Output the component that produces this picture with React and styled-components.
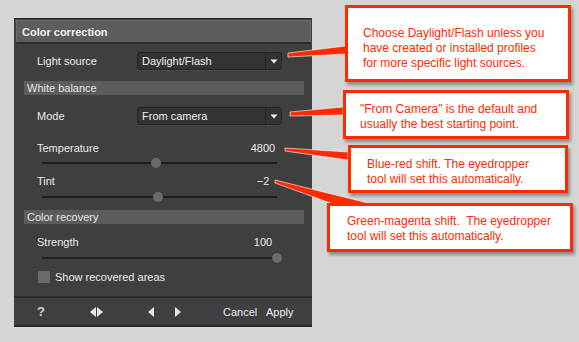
import React from "react";
import styled, { createGlobalStyle } from "styled-components";

const GlobalStyle = createGlobalStyle`
  body {
    margin: 0;
    background: #d5d5d5;
    font-family: "Liberation Sans", Arial, sans-serif;
  }
`;

const RED = "#ff2a00";

const Page = styled.div`
  position: relative;
  width: 579px;
  height: 342px;
  overflow: hidden;
  padding: 18px 0 0 14px;
  box-sizing: border-box;
`;

const Panel = styled.div`
  width: 298px;
  background: #3f3f3f;
  border-top: 1px solid #2a2a2a;
  border-bottom: 2px solid #262626;
  display: flex;
  flex-direction: column;
  color: #ececec;
  font-size: 11px;
`;

const Header = styled.div`
  height: 21px;
  margin: 1px 1px 0 2px;
  background: #5d5d5d;
  border: 1px solid #6a6a6a;
  border-bottom: none;
  display: flex;
  align-items: center;
  padding-left: 5px;
  font-weight: bold;
  color: #f2f2f2;
  box-shadow: 0 2px 0 #2c2c2c;
`;

const Body = styled.div`
  display: flex;
  flex-direction: column;
  padding: 10px 0 13px 0;
`;

const Row = styled.div`
  height: ${(p) => p.h || 18}px;
  margin-top: ${(p) => p.mt || 0}px;
  display: flex;
  align-items: center;
  padding-left: 23px;
`;

const Label = styled.span`
  width: 100px;
`;

const Select = styled.div`
  width: 143px;
  height: 16px;
  border: 1px solid #242424;
  border-radius: 3px;
  background: #333333;
  display: flex;
  align-items: center;
  box-shadow: 0 1px 0 #4a4a4a;
`;

const SelectText = styled.span`
  flex: 1;
  padding-left: 4px;
  color: #f0f0f0;
`;

const SelectArrow = styled.span`
  width: 15px;
  height: 100%;
  border-left: 1px solid #242424;
  display: flex;
  align-items: center;
  justify-content: center;
`;

const Section = styled.div`
  height: 14px;
  margin: ${(p) => p.mt || 0}px 8px 0 10px;
  background: #5c5c5c;
  display: flex;
  align-items: center;
  padding-left: 3px;
  color: #e6e6e6;
`;

const ParamHead = styled.div`
  display: flex;
  align-items: center;
  height: 14px;
  margin-top: ${(p) => p.mt || 0}px;
  padding-left: 23px;
`;

const ParamLabel = styled.span`
  flex: 1;
`;

const ParamValue = styled.span`
  width: 40px;
  text-align: center;
  margin-right: 29px;
`;

const Track = styled.div`
  position: relative;
  height: 2px;
  margin: ${(p) => p.mt || 0}px 35px 0 28px;
  background: #1f1f1f;
`;

const Thumb = styled.div`
  position: absolute;
  top: -4px;
  width: 10px;
  height: 10px;
  border-radius: 50%;
  background: #6b6b6b;
  transform: translateX(-5px);
`;

const CheckRow = styled.label`
  display: flex;
  align-items: center;
  gap: 5px;
  margin-top: 12px;
  padding-left: 24px;
`;

const Box = styled.span`
  width: 12px;
  height: 12px;
  background: #6a6a6a;
`;

const Footer = styled.div`
  height: 27px;
  border-top: 2px solid #2b2b2b;
  display: flex;
  align-items: center;
  padding-left: 23px;
  color: #e2e2e2;
`;

const FooterBtn = styled.span`
  width: ${(p) => p.w}px;
  display: flex;
  align-items: center;
  font-weight: ${(p) => (p.bold ? "bold" : "normal")};
  font-size: ${(p) => (p.bold ? 13 : 11)}px;
  color: ${(p) => (p.bold ? "#cfcfcf" : "#ececec")};
`;

const Gap = styled.span`
  width: ${(p) => p.w}px;
`;

const Callout = styled.div`
  position: absolute;
  left: ${(p) => p.x}px;
  top: ${(p) => p.y}px;
  width: ${(p) => p.w}px;
  height: ${(p) => p.h}px;
  box-sizing: border-box;
  background: #ffffff;
  border: 3px solid ${RED};
  box-shadow: 2px 3px 3px rgba(0, 0, 0, 0.35);
  color: ${RED};
  font-size: 12px;
  line-height: 15px;
  padding: ${(p) => p.pad};
  z-index: 2;
`;

const Tails = styled.svg`
  position: absolute;
  left: 0;
  top: 0;
  z-index: 1;
`;

const Caret = () => (
  <svg width="8" height="5" viewBox="0 0 8 5">
    <path d="M0.5 0.5H7.5L4 4.5Z" fill="#f4f4f4" />
  </svg>
);

const Tri = ({ dir }) => (
  <svg width="6" height="10" viewBox="0 0 6 10">
    <path d={dir === "l" ? "M6 0V10L0 5Z" : "M0 0V10L6 5Z"} fill="#e6e6e6" />
  </svg>
);

const Slider = ({ pos, mt }) => (
  <Track mt={mt}>
    <Thumb style={{ left: `${pos}%` }} />
  </Track>
);

const tails = [
  "288,53 346,46 346,54 288,57",
  "290,112 343,107 343,115 290,116",
  "285,148 348,152 348,160 285,151",
  "275,180 372,204 333,204 275,183",
];

export default function App() {
  return (
    <Page>
      <GlobalStyle />
      <Panel>
        <Header>Color correction</Header>
        <Body>
          <Row h={18}>
            <Label>Light source</Label>
            <Select>
              <SelectText>Daylight/Flash</SelectText>
              <SelectArrow>
                <Caret />
              </SelectArrow>
            </Select>
          </Row>
          <Section mt={11}>White balance</Section>
          <Row h={18} mt={12}>
            <Label>Mode</Label>
            <Select>
              <SelectText>From camera</SelectText>
              <SelectArrow>
                <Caret />
              </SelectArrow>
            </Select>
          </Row>
          <ParamHead mt={16}>
            <ParamLabel>Temperature</ParamLabel>
            <ParamValue>4800</ParamValue>
          </ParamHead>
          <Slider pos={48.5} mt={7} />
          <ParamHead mt={10}>
            <ParamLabel>Tint</ParamLabel>
            <ParamValue>−2</ParamValue>
          </ParamHead>
          <Slider pos={49.5} mt={8} />
          <Section mt={12}>Color recovery</Section>
          <ParamHead mt={11}>
            <ParamLabel>Strength</ParamLabel>
            <ParamValue>100</ParamValue>
          </ParamHead>
          <Slider pos={100} mt={8} />
          <CheckRow>
            <Box />
            Show recovered areas
          </CheckRow>
        </Body>
        <Footer>
          <FooterBtn w={53} bold>
            ?
          </FooterBtn>
          <FooterBtn w={58}>
            <Tri dir="l" />
            <Gap w={1} />
            <Tri dir="r" />
          </FooterBtn>
          <FooterBtn w={75}>
            <Tri dir="l" />
            <Gap w={21} />
            <Tri dir="r" />
          </FooterBtn>
          <FooterBtn w={43}>Cancel</FooterBtn>
          <FooterBtn w={40}>Apply</FooterBtn>
        </Footer>
      </Panel>

      <Tails width="579" height="342">
        {tails.map((pts) => (
          <polygon key={pts} points={pts} fill={RED} stroke="#ffffff" strokeWidth="0.6" />
        ))}
      </Tails>

      <Callout x={345} y={5} w={226} h={77} pad="18px 0 0 15px">
        Choose Daylight/Flash unless you
        <br />
        have created or installed profiles
        <br />
        for more specific light sources.
      </Callout>
      <Callout x={343} y={90} w={226} h={49} pad="9px 0 0 14px">
        "From Camera" is the default and
        <br />
        usually the best starting point.
      </Callout>
      <Callout x={348} y={145} w={220} h={48} pad="9px 0 0 16px">
        Blue-red shift. The eyedropper
        <br />
        tool will set this automatically.
      </Callout>
      <Callout x={327} y={203} w={246} h={49} pad="8px 0 0 17px">
        Green-magenta shift.&nbsp; The eyedropper
        <br />
        tool will set this automatically.
      </Callout>
    </Page>
  );
}
